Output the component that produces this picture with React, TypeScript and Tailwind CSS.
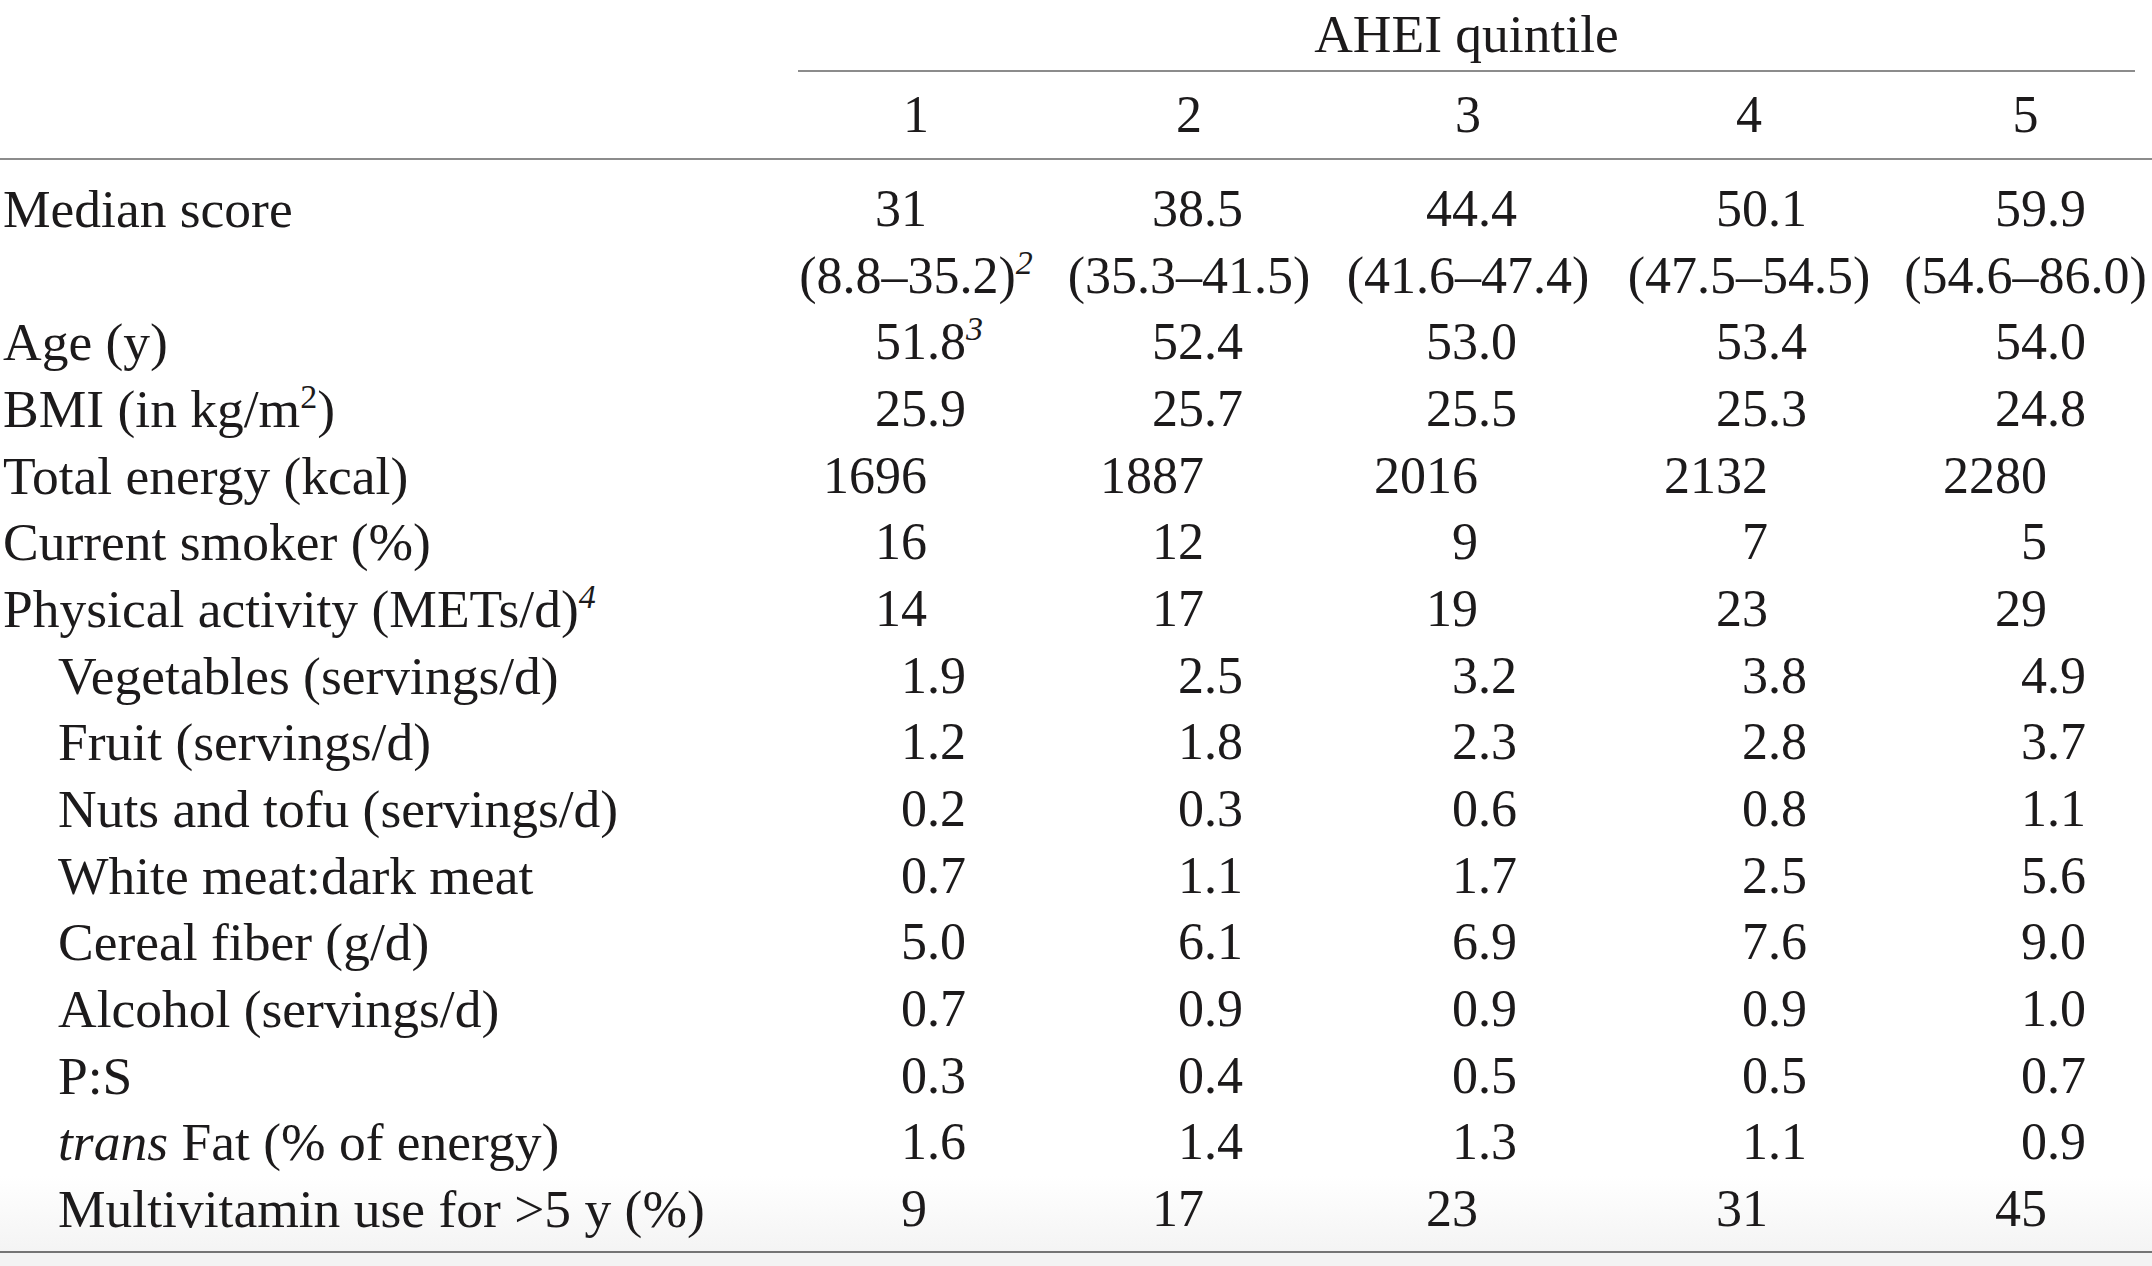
import React from "react";

type Cell = { v: string; sup?: string };

const decW = ["w-[146px]", "w-[153px]", "w-[151px]", "w-[159px]", "w-[158px]"];

const SUP = "text-[34px] leading-none italic align-baseline relative -top-[19px]";
const SUPR = "text-[34px] leading-none align-baseline relative -top-[19px]";

const rows: { label: React.ReactNode; indent?: boolean; cells: Cell[] }[] = [
  { label: "Median score", cells: [{ v: "31" }, { v: "38.5" }, { v: "44.4" }, { v: "50.1" }, { v: "59.9" }] },
  { label: "Age (y)", cells: [{ v: "51.8", sup: "3" }, { v: "52.4" }, { v: "53.0" }, { v: "53.4" }, { v: "54.0" }] },
  {
    label: (
      <>
        BMI (in kg/m<sup className={SUPR}>2</sup>)
      </>
    ),
    cells: [{ v: "25.9" }, { v: "25.7" }, { v: "25.5" }, { v: "25.3" }, { v: "24.8" }],
  },
  { label: "Total energy (kcal)", cells: [{ v: "1696" }, { v: "1887" }, { v: "2016" }, { v: "2132" }, { v: "2280" }] },
  { label: "Current smoker (%)", cells: [{ v: "16" }, { v: "12" }, { v: "9" }, { v: "7" }, { v: "5" }] },
  {
    label: (
      <>
        Physical activity (METs/d)<sup className={SUP}>4</sup>
      </>
    ),
    cells: [{ v: "14" }, { v: "17" }, { v: "19" }, { v: "23" }, { v: "29" }],
  },
  { label: "Vegetables (servings/d)", indent: true, cells: [{ v: "1.9" }, { v: "2.5" }, { v: "3.2" }, { v: "3.8" }, { v: "4.9" }] },
  { label: "Fruit (servings/d)", indent: true, cells: [{ v: "1.2" }, { v: "1.8" }, { v: "2.3" }, { v: "2.8" }, { v: "3.7" }] },
  { label: "Nuts and tofu (servings/d)", indent: true, cells: [{ v: "0.2" }, { v: "0.3" }, { v: "0.6" }, { v: "0.8" }, { v: "1.1" }] },
  { label: "White meat:dark meat", indent: true, cells: [{ v: "0.7" }, { v: "1.1" }, { v: "1.7" }, { v: "2.5" }, { v: "5.6" }] },
  { label: "Cereal fiber (g/d)", indent: true, cells: [{ v: "5.0" }, { v: "6.1" }, { v: "6.9" }, { v: "7.6" }, { v: "9.0" }] },
  { label: "Alcohol (servings/d)", indent: true, cells: [{ v: "0.7" }, { v: "0.9" }, { v: "0.9" }, { v: "0.9" }, { v: "1.0" }] },
  { label: "P:S", indent: true, cells: [{ v: "0.3" }, { v: "0.4" }, { v: "0.5" }, { v: "0.5" }, { v: "0.7" }] },
  {
    label: (
      <>
        <span className="italic">trans</span> Fat (% of energy)
      </>
    ),
    indent: true,
    cells: [{ v: "1.6" }, { v: "1.4" }, { v: "1.3" }, { v: "1.1" }, { v: "0.9" }],
  },
  { label: "Multivitamin use for >5 y (%)", indent: true, cells: [{ v: "9" }, { v: "17" }, { v: "23" }, { v: "31" }, { v: "45" }] },
];

const ranges = ["(8.8–35.2)", "(35.3–41.5)", "(41.6–47.4)", "(47.5–54.5)", "(54.6–86.0)"];

const GRID = "grid grid-cols-[781px_270px_276px_282px_280px_263px]";

function Val({ c, i }: { c: Cell; i: number }) {
  const idx = c.v.indexOf(".");
  const int = idx >= 0 ? c.v.slice(0, idx) : c.v;
  const frac = idx >= 0 ? c.v.slice(idx) : "";
  return (
    <div className="flex whitespace-nowrap">
      <span className={`${decW[i]} shrink-0 text-right`}>{int}</span>
      <span>
        {frac}
        {c.sup && <sup className={SUP}>{c.sup}</sup>}
      </span>
    </div>
  );
}

function Row({ label, indent, cells }: { label: React.ReactNode; indent?: boolean; cells: Cell[] }) {
  return (
    <div className={`${GRID} h-[66.67px]`}>
      <div className={`${indent ? "pl-[58px]" : "pl-[3px]"} whitespace-nowrap text-[53.5px]`}>{label}</div>
      {cells.map((c, i) => (
        <Val key={i} c={c} i={i} />
      ))}
    </div>
  );
}

export default function App() {
  return (
    <div
      className="w-[2152px] h-[1266px] bg-[#f3f3f3] text-[#1c1a1b] text-[52px] leading-[66.67px] overflow-hidden"
      style={{ fontFamily: '"Liberation Serif", "Times New Roman", serif' }}
    >
      <div className="bg-white">
        <div className="h-[72px] pt-px ml-[798px] mr-[17px] border-b-2 border-[#8c8c8c] text-center text-[53.5px]">
          AHEI quintile
        </div>
        <div className={`${GRID} h-[88px] pt-[10px] border-b-2 border-[#8c8c8c]`}>
          <div />
          <div className="text-center">1</div>
          <div className="text-center">2</div>
          <div className="text-center">3</div>
          <div className="text-center">4</div>
          <div className="text-center pl-[10px]">5</div>
        </div>
        <div className="pt-[16px]">
          <Row label={rows[0].label} cells={rows[0].cells} />
          <div className={`${GRID} h-[66.67px]`}>
            <div />
            {ranges.map((r, i) => (
              <div key={i} className={`text-center whitespace-nowrap ${i === 4 ? "pl-[10px]" : ""}`}>
                {r}
                {i === 0 && <sup className={SUP}>2</sup>}
              </div>
            ))}
          </div>
          {rows.slice(1, rows.length - 1).map((r, i) => (
            <Row key={i} label={r.label} indent={r.indent} cells={r.cells} />
          ))}
        </div>
        <div className="bg-gradient-to-b from-white to-[#f4f4f4] pb-[8px] border-b-2 border-[#747474]">
          {rows.slice(rows.length - 1).map((r, i) => (
            <Row key={i} label={r.label} indent={r.indent} cells={r.cells} />
          ))}
        </div>
      </div>
    </div>
  );
}
